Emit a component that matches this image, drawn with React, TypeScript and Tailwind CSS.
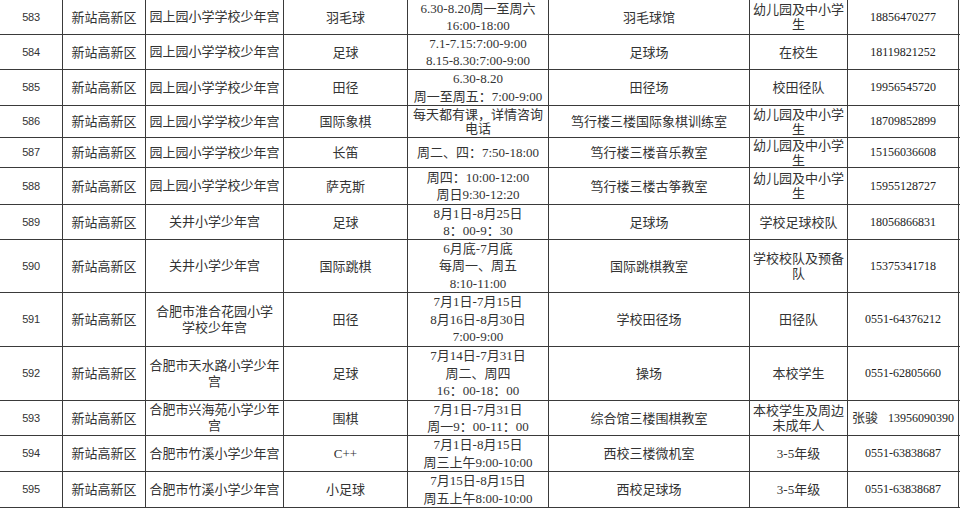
const cols = ['w-[63px]', 'w-[83px]', 'w-[138px]', 'w-[124px]', 'w-[141px]', 'w-[201px]', 'w-[98px]', 'w-[111px]'];

type Row = {
    h: string;
    no: string;
    school: string[];
    item: string;
    time: string[];
    place: string[];
    who: string[];
    tel: React.ReactNode;
};

const yy = ['园上园小学学校少年宫'];
const kid = ['幼儿园及中小学', '生'];

const rows: Row[] = [
    { h: 'h-[35px]', no: '583', school: yy, item: '羽毛球', time: ['6.30-8.20周一至周六', '16:00-18:00'], place: ['羽毛球馆'], who: kid, tel: '18856470277' },
    { h: 'h-[35px]', no: '584', school: yy, item: '足球', time: ['7.1-7.15:7:00-9:00', '8.15-8.30:7:00-9:00'], place: ['足球场'], who: ['在校生'], tel: '18119821252' },
    { h: 'h-[36px]', no: '585', school: yy, item: '田径', time: ['6.30-8.20', '周一至周五：7:00-9:00'], place: ['田径场'], who: ['校田径队'], tel: '19956545720' },
    { h: 'h-[32px]', no: '586', school: yy, item: '国际象棋', time: ['每天都有课，详情咨询', '电话'], place: ['笃行楼三楼国际象棋训练室'], who: kid, tel: '18709852899' },
    { h: 'h-[30px]', no: '587', school: yy, item: '长笛', time: ['周二、四：7:50-18:00'], place: ['笃行楼三楼音乐教室'], who: kid, tel: '15156036608' },
    { h: 'h-[37px]', no: '588', school: yy, item: '萨克斯', time: ['周四：10:00-12:00', '周日9:30-12:20'], place: ['笃行楼三楼古筝教室'], who: kid, tel: '15955128727' },
    { h: 'h-[35px]', no: '589', school: ['关井小学少年宫'], item: '足球', time: ['8月1日-8月25日', '8：00-9：30'], place: ['足球场'], who: ['学校足球校队'], tel: '18056866831' },
    { h: 'h-[53px]', no: '590', school: ['关井小学少年宫'], item: '国际跳棋', time: ['6月底-7月底', '每周一、周五', '8:10-11:00'], place: ['国际跳棋教室'], who: ['学校校队及预备', '队'], tel: '15375341718' },
    { h: 'h-[54px]', no: '591', school: ['合肥市淮合花园小学', '学校少年宫'], item: '田径', time: ['7月1日-7月15日', '8月16日-8月30日', '7:00-9:00'], place: ['学校田径场'], who: ['田径队'], tel: '0551-64376212' },
    { h: 'h-[54px]', no: '592', school: ['合肥市天水路小学少年', '宫'], item: '足球', time: ['7月14日-7月31日', '周二、周四', '16：00-18：00'], place: ['操场'], who: ['本校学生'], tel: '0551-62805660' },
    { h: 'h-[35px]', no: '593', school: ['合肥市兴海苑小学少年', '宫'], item: '围棋', time: ['7月1日-7月31日', '周一9：00-11：00'], place: ['综合馆三楼围棋教室'], who: ['本校学生及周边', '未成年人'], tel: (<><span className="text-[13px] text-[#333]">张骏</span><span className="ml-[10px]">13956090390</span></>) },
    { h: 'h-[36px]', no: '594', school: ['合肥市竹溪小学少年宫'], item: 'C++', time: ['7月1日-8月15日', '周三上午9:00-10:00'], place: ['西校三楼微机室'], who: ['3-5年级'], tel: '0551-63838687' },
    { h: 'h-[36px]', no: '595', school: ['合肥市竹溪小学少年宫'], item: '小足球', time: ['7月15日-8月15日', '周五上午8:00-10:00'], place: ['西校足球场'], who: ['3-5年级'], tel: '0551-63838687' },
];

function Cell({ w, lines, lh = 'leading-[17px]', extra = '' }: { w: string; lines: React.ReactNode[]; lh?: string; extra?: string }) {
    return (
        <div className={`${w} flex shrink-0 flex-col items-center justify-center border-r border-[#3a3a3a] text-center whitespace-nowrap ${lh} ${extra}`}>
            {lines.map((l, i) => (
                <div key={i}>{l}</div>
            ))}
        </div>
    );
}

export default function App() {
    return (
        <div className="h-[508px] w-[960px] overflow-hidden bg-white text-[13px] text-[#333]" style={{ fontFamily: '"Liberation Serif", "Noto Sans CJK SC", serif' }}>
            {rows.map((r) => (
                <div key={r.no} className={`flex ${r.h} border-b border-[#3a3a3a]`}>
                    <Cell
                        w={cols[0]}
                        lines={[r.no]}
                        extra="text-[11px] tracking-[-0.3px] font-['Liberation_Sans',sans-serif] border-r-[1.5px]"
                    />
                    <Cell w={cols[1]} lines={['新站高新区']} />
                    <Cell w={cols[2]} lines={r.school} lh="leading-[16px]" />
                    <Cell w={cols[3]} lines={[r.item]} />
                    <Cell w={cols[4]} lines={r.time} lh={r.no === '586' ? 'leading-[14px]' : 'leading-[17.5px]'} />
                    <Cell w={cols[5]} lines={r.place} />
                    <Cell w={cols[6]} lines={r.who} lh="leading-[15px]" />
                    <Cell w={cols[7]} lines={[r.tel]} extra="text-[12px] text-[#222]" />
                </div>
            ))}
        </div>
    );
}
